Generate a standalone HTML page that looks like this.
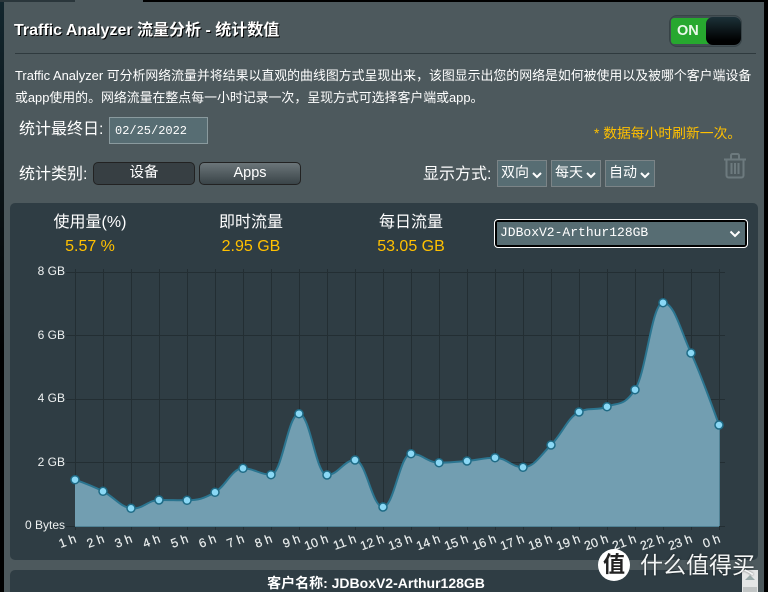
<!DOCTYPE html>
<html><head><meta charset="utf-8"><style>
*{box-sizing:border-box}
html,body{margin:0;padding:0;width:768px;height:592px;overflow:hidden;background:#000}
body{position:relative;font-family:"Liberation Sans","Noto Sans CJK SC",sans-serif;color:#fff}
.a{position:absolute;white-space:nowrap}
.sel{position:absolute;top:160px;height:27px;width:50px;background:#576d73;border:1px solid #7b8487;font-size:14px;line-height:23px;padding-left:3px;color:#fff}
.sel svg,.big svg{position:absolute}
.btn{position:absolute;top:162px;height:23px;width:102px;border-radius:5px;border:1px solid #222;font-size:14.500px;line-height:20px;text-align:center;color:#fff}
.lab{font-size:16px;color:#fff;text-align:center}
.val{font-size:16px;color:#ffc000;text-align:center}
.yl{position:absolute;right:703px;font-size:12px;color:#eef1f1;line-height:14px;white-space:nowrap}
</style></head><body>
<div class="a" style="left:0;top:0;width:4px;height:592px;background:linear-gradient(#12262e,#0a1114 35%,#000 60%)"></div>
<div class="a" style="left:0;top:0;width:75px;height:2px;background:#2a363b"></div>
<div class="a" style="left:4px;top:2px;width:760px;height:590px;background:#4d595d"></div>
<div class="a" style="left:75px;top:0;width:68px;height:2px;background:#4d595d"></div>

<div class="a" style="left:14px;top:21px;font-size:16px;line-height:20px;font-weight:bold;text-shadow:1px 1px 0 #000">Traffic Analyzer 流量分析 - 统计数值</div>
<div class="a" style="left:15px;top:53px;width:741px;height:1px;background:#2f3a3e"></div>

<div class="a" style="left:669px;top:15px;width:73px;height:32px;border-radius:8px;background:#424e53;border:1px solid #384347"></div>
<div class="a" style="left:671px;top:18px;width:42px;height:26px;background:#27a82f;border-radius:3px;font-size:14.500px;line-height:26px;padding-left:6px;color:#eaf8ea;font-weight:bold">ON</div>
<div class="a" style="left:706px;top:17px;width:35px;height:28px;border-radius:7px;background:linear-gradient(#1c3138,#000 85%)"></div>

<div class="a" style="left:15px;top:65px;font-size:12.900px;line-height:21.500px;color:#fff">Traffic Analyzer 可分析网络流量并将结果以直观的曲线图方式呈现出来，该图显示出您的网络是如何被使用以及被哪个客户端设备<br>或app使用的。网络流量在整点每一小时记录一次，呈现方式可选择客户端或app。</div>

<div class="a" style="left:19px;top:119px;font-size:16px;line-height:22px;color:#fff">统计最终日:</div>
<div class="a" style="left:109px;top:117px;width:99px;height:27px;background:#576d73;border:1px solid #8a9a9e;font:12px/26px 'Liberation Mono','DejaVu Sans Mono',monospace;padding-left:5px;color:#fff">02/25/2022</div>
<div class="a" style="left:594px;top:125px;font-size:13.800px;line-height:18px;color:#ffc000">* 数据每小时刷新一次。</div>

<div class="a" style="left:19px;top:164px;font-size:16px;line-height:22px;color:#fff">统计类别:</div>
<div class="btn" style="left:93px;background:#373f43">设备</div>
<div class="btn" style="left:199px;background:linear-gradient(#6b7579,#3a4448)">Apps</div>

<div class="a" style="left:423px;top:164px;font-size:16px;line-height:22px;color:#fff">显示方式:</div>
<div class="sel" style="left:497px">双向<svg style="left:34px;top:10px" width="10" height="8"><path d="M1 2l4 4 4-4" fill="none" stroke="#fff" stroke-width="2"/></svg></div>
<div class="sel" style="left:551px">每天<svg style="left:34px;top:10px" width="10" height="8"><path d="M1 2l4 4 4-4" fill="none" stroke="#fff" stroke-width="2"/></svg></div>
<div class="sel" style="left:605px">自动<svg style="left:34px;top:10px" width="10" height="8"><path d="M1 2l4 4 4-4" fill="none" stroke="#fff" stroke-width="2"/></svg></div>

<svg class="a" style="left:723px;top:153px" width="26" height="28" fill="none" stroke="#6d7a7e" stroke-width="2"><path d="M1 6.500h22M8 6V2.500a1.500 1.500 0 0 1 1.500-1.500h5a1.500 1.500 0 0 1 1.500 1.500V6M3.500 7v15.500a2 2 0 0 0 2 2h13a2 2 0 0 0 2-2V7M8.500 10v11M12 10v11M15.500 10v11"/></svg>

<div class="a" style="left:10px;top:203px;width:748px;height:357px;background:#2f3d44;border-radius:5px"></div>
<div class="a" style="left:10px;top:570px;width:748px;height:22px;background:#2f3d44;border-radius:5px 5px 0 0"></div>

<div class="a lab" style="left:30px;top:212px;width:120px;line-height:22px">使用量(%)</div>
<div class="a val" style="left:30px;top:237px;width:120px;line-height:20px">5.57 %</div>
<div class="a lab" style="left:191px;top:212px;width:120px;line-height:22px">即时流量</div>
<div class="a val" style="left:191px;top:237px;width:120px;line-height:20px">2.95 GB</div>
<div class="a lab" style="left:351px;top:212px;width:120px;line-height:22px">每日流量</div>
<div class="a val" style="left:351px;top:237px;width:120px;line-height:20px">53.05 GB</div>

<div class="a big" style="left:494px;top:219px;width:254px;height:29px;background:#000;border:1px solid #fff;border-radius:4px"></div>
<div class="a big" style="left:497px;top:222px;width:248px;height:23px;background:#576d73;font:13px/22px 'Liberation Mono','DejaVu Sans Mono',monospace;padding-left:3px;color:#fff">JDBoxV2-Arthur128GB<svg style="left:232px;top:8px" width="12" height="8"><path d="M1.500 1.500l4.500 4.500 4.500-4.500" fill="none" stroke="#fff" stroke-width="2"/></svg></div>

<svg class="a" style="left:0;top:0" width="768" height="592">
<g stroke="#232e33" stroke-width="1" fill="none">
<path d="M66 272.500H725M66 335.500H725M66 399.500H725M66 462.500H725M66 526.500H725"/>
<path d="M75.500 269V530M103.500 269V530M131.500 269V530M159.500 269V530M187.500 269V530M215.500 269V530M243.500 269V530M271.500 269V530M299.500 269V530M327.500 269V530M355.500 269V530M383.500 269V530M411.500 269V530M439.500 269V530M467.500 269V530M495.500 269V530M523.500 269V530M551.500 269V530M579.500 269V530M607.500 269V530M635.500 269V530M663.500 269V530M691.500 269V530M719.500 269V530"/>
</g>
<path fill="#729eb1" d="M75 479.700C75 479.700 91.800 485.580 103 491.300C114.200 497.020 119.800 506.560 131 508.300C142.200 510.040 147.800 500 159 500C170.200 500 175.800 500.300 187 500.300C198.200 500.300 203.800 498.700 215 492.300C226.200 485.900 231.800 468.300 243 468.300C254.200 468.300 259.800 474.700 271 474.700C282.200 474.700 287.800 413.640 299 413.700C310.200 413.760 315.800 475 327 475C338.200 475 343.800 460 355 460C366.200 460 371.800 507 383 507C394.200 507 399.800 453.700 411 453.700C422.200 453.700 427.800 462.700 439 462.700C450.200 462.700 455.800 462 467 461C478.200 460 483.800 457.700 495 457.700C506.200 457.700 511.800 467.300 523 467.300C534.200 467.300 539.800 456.060 551 445C562.200 433.940 567.800 417.300 579 412C590.200 406.700 595.800 411.160 607 406.700C618.200 402.240 623.800 406.700 635 389.700C646.200 372.700 651.800 302.700 663 302.700C674.200 302.700 679.800 328.540 691 353C702.200 377.460 719 425 719 425V526H75Z"/>
<path fill="none" stroke="#2b7590" stroke-width="2" d="M75 479.700C75 479.700 91.800 485.580 103 491.300C114.200 497.020 119.800 506.560 131 508.300C142.200 510.040 147.800 500 159 500C170.200 500 175.800 500.300 187 500.300C198.200 500.300 203.800 498.700 215 492.300C226.200 485.900 231.800 468.300 243 468.300C254.200 468.300 259.800 474.700 271 474.700C282.200 474.700 287.800 413.640 299 413.700C310.200 413.760 315.800 475 327 475C338.200 475 343.800 460 355 460C366.200 460 371.800 507 383 507C394.200 507 399.800 453.700 411 453.700C422.200 453.700 427.800 462.700 439 462.700C450.200 462.700 455.800 462 467 461C478.200 460 483.800 457.700 495 457.700C506.200 457.700 511.800 467.300 523 467.300C534.200 467.300 539.800 456.060 551 445C562.200 433.940 567.800 417.300 579 412C590.200 406.700 595.800 411.160 607 406.700C618.200 402.240 623.800 406.700 635 389.700C646.200 372.700 651.800 302.700 663 302.700C674.200 302.700 679.800 328.540 691 353C702.200 377.460 719 425 719 425"/>
<path stroke="#4f8194" stroke-width="1" d="M75 526.500H719M719.500 425V526"/>
<g fill="#8ad8f5" stroke="#1f6b86" stroke-width="1.500">
<circle cx="75" cy="479.700" r="4"/><circle cx="103" cy="491.300" r="4"/><circle cx="131" cy="508.300" r="4"/><circle cx="159" cy="500" r="4"/><circle cx="187" cy="500.300" r="4"/><circle cx="215" cy="492.300" r="4"/><circle cx="243" cy="468.300" r="4"/><circle cx="271" cy="474.700" r="4"/><circle cx="299" cy="413.700" r="4"/><circle cx="327" cy="475" r="4"/><circle cx="355" cy="460" r="4"/><circle cx="383" cy="507" r="4"/><circle cx="411" cy="453.700" r="4"/><circle cx="439" cy="462.700" r="4"/><circle cx="467" cy="461" r="4"/><circle cx="495" cy="457.700" r="4"/><circle cx="523" cy="467.300" r="4"/><circle cx="551" cy="445" r="4"/><circle cx="579" cy="412" r="4"/><circle cx="607" cy="406.700" r="4"/><circle cx="635" cy="389.700" r="4"/><circle cx="663" cy="302.700" r="4"/><circle cx="691" cy="353" r="4"/><circle cx="719" cy="425" r="4"/>
</g>
<g font-family="Liberation Sans,sans-serif" font-size="12.500" fill="#e8ecec" text-anchor="end" stroke="#e8ecec" stroke-width=".2">
<text transform="translate(77 542) rotate(-20)">1 h</text><text transform="translate(105 542) rotate(-20)">2 h</text><text transform="translate(133 542) rotate(-20)">3 h</text><text transform="translate(161 542) rotate(-20)">4 h</text><text transform="translate(189 542) rotate(-20)">5 h</text><text transform="translate(217 542) rotate(-20)">6 h</text><text transform="translate(245 542) rotate(-20)">7 h</text><text transform="translate(273 542) rotate(-20)">8 h</text><text transform="translate(301 542) rotate(-20)">9 h</text><text transform="translate(329 542) rotate(-20)">10 h</text><text transform="translate(357 542) rotate(-20)">11 h</text><text transform="translate(385 542) rotate(-20)">12 h</text><text transform="translate(413 542) rotate(-20)">13 h</text><text transform="translate(441 542) rotate(-20)">14 h</text><text transform="translate(469 542) rotate(-20)">15 h</text><text transform="translate(497 542) rotate(-20)">16 h</text><text transform="translate(525 542) rotate(-20)">17 h</text><text transform="translate(553 542) rotate(-20)">18 h</text><text transform="translate(581 542) rotate(-20)">19 h</text><text transform="translate(609 542) rotate(-20)">20 h</text><text transform="translate(637 542) rotate(-20)">21 h</text><text transform="translate(665 542) rotate(-20)">22 h</text><text transform="translate(693 542) rotate(-20)">23 h</text><text transform="translate(721 542) rotate(-20)">0 h</text>
</g>
</svg>

<div class="yl" style="top:264px">8 GB</div>
<div class="yl" style="top:328px">6 GB</div>
<div class="yl" style="top:391px">4 GB</div>
<div class="yl" style="top:455px">2 GB</div>
<div class="yl" style="top:518px">0 Bytes</div>

<div class="a" style="left:10px;top:574px;width:732px;text-align:center;font-size:14px;line-height:18px;font-weight:bold;color:#fff">客户名称: JDBoxV2-Arthur128GB</div>

<div class="a" style="left:742px;top:570px;width:16px;height:22px;background:#e4e6e6"></div>
<svg class="a" style="left:742px;top:570px" width="16" height="22"><path d="M8 5l5 5H3z" fill="#9aa"/><rect x="1" y="17" width="14" height="5" fill="#c0c4c4"/></svg>

<div class="a" style="left:598px;top:549px;width:32px;height:32px;border-radius:50%;background:#fff;color:#222;font-size:22px;line-height:32px;text-align:center;font-weight:bold">值</div>
<div class="a" style="left:640px;top:550px;font-size:23px;line-height:30px;color:#f4f6f6;text-shadow:0 0 2px rgba(0,0,0,.6)">什么值得买</div>
</body></html>
